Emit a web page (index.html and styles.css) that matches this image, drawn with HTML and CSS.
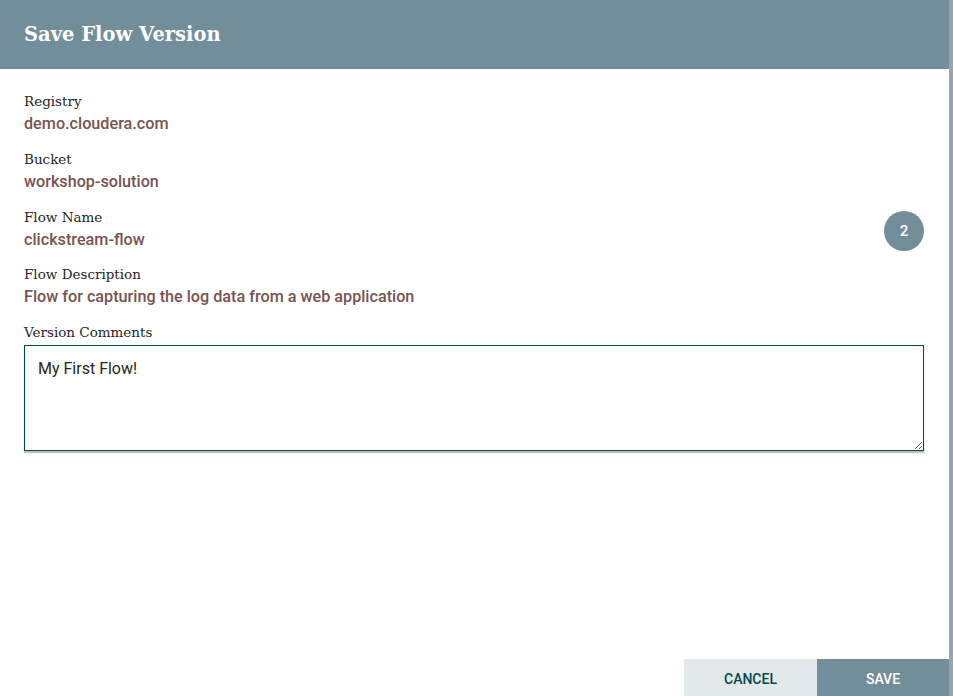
FILE: index.html
```html
<!DOCTYPE html>
<html>
<head>
<meta charset="utf-8">
<link rel="stylesheet" href="styles.css">
</head>
<body>
<div class="dialog">
  <div class="header">Save Flow Version</div>
  <div class="content">
    <div class="field">
      <div class="label">Registry</div>
      <div class="value">demo.cloudera.com</div>
    </div>
    <div class="field">
      <div class="label">Bucket</div>
      <div class="value">workshop-solution</div>
    </div>
    <div class="field">
      <div class="label">Flow Name</div>
      <div class="value">clickstream-flow</div>
    </div>
    <div class="field">
      <div class="label">Flow Description</div>
      <div class="value">Flow for capturing the log data from a web application</div>
    </div>
    <div class="field">
      <div class="label">Version Comments</div>
      <textarea class="comments">My First Flow!</textarea>
    </div>
    <div class="badge">2</div>
  </div>
  <div class="footer">
    <button class="btn cancel">Cancel</button>
    <button class="btn save">Save</button>
  </div>
</div>
</body>
</html>
```
FILE: styles.css
```css
html, body {
  margin: 0;
  padding: 0;
  height: 100%;
}
body {
  background: #95a5ad;
  overflow: hidden;
}
.dialog {
  width: 949px;
  height: 696px;
  background: #ffffff;
  display: flex;
  flex-direction: column;
}
.header {
  height: 69px;
  background: #728e9b;
  color: #ffffff;
  font-family: "DejaVu Serif", serif;
  font-weight: bold;
  font-size: 19.5px;
  padding-left: 24px;
  padding-bottom: 1px;
  display: flex;
  align-items: center;
  box-sizing: border-box;
}
.content {
  flex: 1;
  position: relative;
  padding: 23px 25px 0 24px;
  display: flex;
  flex-direction: column;
  gap: 12.8px;
}
.field {
  display: flex;
  flex-direction: column;
}
.label {
  font-family: "DejaVu Serif", serif;
  font-size: 13.5px;
  color: #262626;
  line-height: 18px;
}
.value {
  font-family: Roboto, sans-serif;
  font-size: 16.2px;
  font-weight: 500;
  color: #775351;
  line-height: 27px;
}
.comments {
  margin-top: 4px;
  height: 106px;
  box-sizing: border-box;
  border: 1px solid #004849;
  box-shadow: 0 2px 1px rgba(0,0,0,0.25);
  padding: 13px 13px;
  font-family: Roboto, sans-serif;
  font-size: 16px;
  color: #262626;
  resize: vertical;
  outline: none;
}
.badge {
  position: absolute;
  left: 884px;
  top: 142px;
  width: 40px;
  height: 40px;
  border-radius: 50%;
  background: #728e9b;
  color: #ffffff;
  font-family: Roboto, sans-serif;
  font-size: 15px;
  font-weight: 500;
  display: flex;
  align-items: center;
  justify-content: center;
}
.footer {
  display: flex;
  justify-content: flex-end;
}
.btn {
  border: none;
  width: 133px;
  height: 37px;
  font-family: Roboto, sans-serif;
  font-size: 14px;
  font-weight: 500;
  text-transform: uppercase;
  padding: 0;
  padding-top: 3px;
}
.cancel {
  background: #e3e8eb;
  color: #004849;
}
.save {
  width: 132px;
  background: #728e9b;
  color: #ffffff;
}
```
